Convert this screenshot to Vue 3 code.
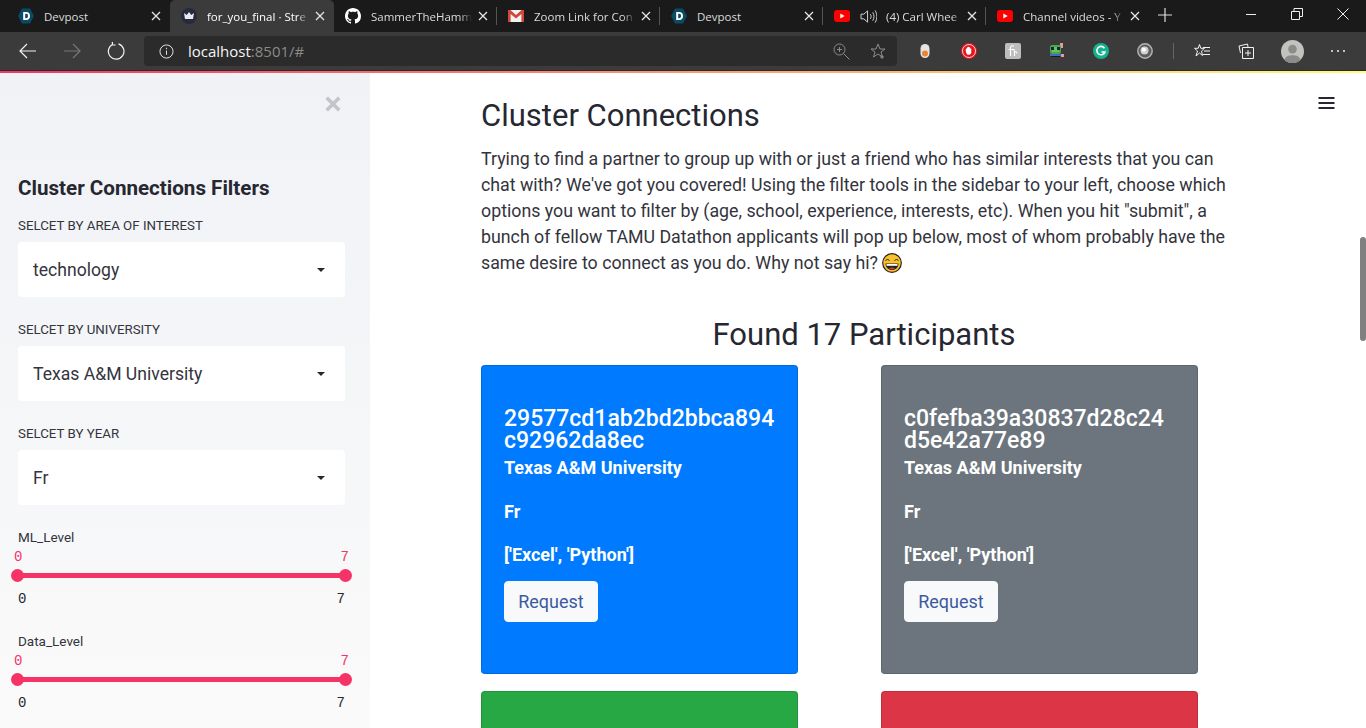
<script setup>
// titles are the part the browser leaves visible in each tab
const tabs = [
  { title: "Devpost", icon: "devpost" },
  { title: "for_you_final · Stre", icon: "crown", active: true },
  { title: "SammerTheHamm", icon: "github" },
  { title: "Zoom Link for Con", icon: "gmail" },
  { title: "Devpost", icon: "devpost" },
  { title: "(4) Carl Whee", icon: "youtube", audio: true },
  { title: "Channel videos - Y", icon: "youtube" },
];

const selects = [
  { label: "SELCET BY AREA OF INTEREST", value: "technology" },
  { label: "SELCET BY UNIVERSITY", value: "Texas A&M University" },
  { label: "SELCET BY YEAR", value: "Fr" },
];

const sliders = ["ML_Level", "Data_Level"];

const cards = [
  { id: "29577cd1ab2bd2bbca894c92962da8ec", color: "#007bff", filled: true },
  { id: "c0fefba39a30837d28c24d5e42a77e89", color: "#6c757d", filled: true },
  { color: "#28a745" },
  { color: "#dc3545" },
];
</script>

<template>
  <div class="screen">
    <header class="browser">
      <div class="tabstrip">
        <div
          v-for="(tab, i) in tabs"
          :key="i"
          class="tab"
          :class="{ active: tab.active }"
        >
          <svg v-if="tab.icon === 'devpost'" class="favicon" viewBox="0 0 16 16">
            <path d="M4 .5h8L16 8l-4 7.500H4L0 8z" fill="#0b4a63" />
            <path d="M5.200 4h3c2.400 0 3.800 1.600 3.800 4s-1.400 4-3.800 4h-3z M7.200 5.800v4.400h1c1.200 0 1.800-.9 1.800-2.200s-.6-2.200-1.800-2.200z" fill="#fff" fill-rule="evenodd" />
          </svg>
          <svg v-else-if="tab.icon === 'crown'" class="favicon" viewBox="0 0 16 16">
            <circle cx="8" cy="8" r="8" fill="#262a3c" />
            <path d="M3 5l2.700 2L8 4l2.300 3L13 5l-1 6H4z" fill="#e8e8ee" />
          </svg>
          <svg v-else-if="tab.icon === 'github'" class="favicon" viewBox="0 0 16 16">
            <path fill="#fff" d="M8 0C3.580 0 0 3.580 0 8c0 3.540 2.290 6.530 5.470 7.590.4.070.55-.17.55-.38 0-.19-.01-.82-.01-1.490-2.010.370-2.530-.49-2.690-.94-.09-.23-.48-.94-.82-1.130-.28-.15-.68-.52-.01-.53.63-.01 1.080.58 1.230.82.720 1.210 1.870.87 2.330.66.070-.52.280-.87.510-1.070-1.780-.2-3.640-.89-3.640-3.950 0-.87.310-1.590.820-2.150-.08-.2-.36-1.020.08-2.120 0 0 .67-.21 2.200.82.640-.18 1.320-.27 2-.27s1.360.09 2 .27c1.530-1.040 2.200-.82 2.200-.82.440 1.100.160 1.920.080 2.120.510.560.820 1.270.820 2.150 0 3.070-1.870 3.750-3.650 3.950.290.250.540.730.540 1.480 0 1.070-.01 1.930-.01 2.200 0 .210.150.460.550.380A8.010 8.010 0 0 0 16 8c0-4.420-3.580-8-8-8z" />
          </svg>
          <svg v-else-if="tab.icon === 'gmail'" class="favicon gmail" viewBox="0 0 16 12">
            <rect width="16" height="12" fill="#f2f2f2" />
            <path d="M0 0h2.400L8 5l5.600-5H16v12h-2.600V4L8 8.600 2.600 4v8H0z" fill="#d0473b" />
          </svg>
          <svg v-else class="favicon yt" viewBox="0 0 16 12">
            <rect width="16" height="12" rx="3" fill="#f00" />
            <path d="M6.300 3.400l4.400 2.600-4.400 2.600z" fill="#fff" />
          </svg>
          <svg v-if="tab.audio" class="speaker" viewBox="0 0 18 16" fill="none" stroke="#ddd">
            <path d="M1 5.500h3l4-3.500v12l-4-3.500H1zM11 5.500c1 1.500 1 3.500 0 5M13.500 3.500c1.800 2.700 1.800 6.300 0 9M16 1.500c2.500 4 2.500 9 0 13" />
          </svg>
          <span class="tab-title">{{ tab.title }}</span>
          <svg class="tab-close" viewBox="0 0 10 10" fill="none" stroke="#e6e6e6" stroke-width="1.300">
            <path d="M1 1l8 8M9 1l-8 8" />
          </svg>
        </div>
        <svg class="new-tab" viewBox="0 0 14 14" fill="none" stroke="#ddd" stroke-width="1.200">
          <path d="M7 0v14M0 7h14" />
        </svg>
        <div class="window-controls">
          <svg viewBox="0 0 12 12" fill="none" stroke="#eee"><path d="M1 6.500h10" /></svg>
          <svg viewBox="0 0 12 12" fill="none" stroke="#eee"><path d="M.5 3.500h8v8h-8zM3 3.500V.5h8.500v8h-3" /></svg>
          <svg viewBox="0 0 12 12" fill="none" stroke="#eee"><path d="M.5.500l11 11M11.500.500l-11 11" /></svg>
        </div>
      </div>

      <div class="toolbar">
        <svg class="nav" viewBox="0 0 18 16" fill="none" stroke="#f2f2f2" stroke-width="1.200"><path d="M17 8H1M8 1L1 8l7 7" /></svg>
        <svg class="nav" viewBox="0 0 18 16" fill="none" stroke="#777" stroke-width="1.200"><path d="M1 8h16M10 1l7 7-7 7" /></svg>
        <svg class="nav" viewBox="0 0 18 18" fill="none" stroke="#f2f2f2" stroke-width="1.200"><path d="M6 2.200a7.800 7.800 0 1 0 5.500-.3M5.400 0v3h3.200" /></svg>
        <div class="address">
          <svg class="info" viewBox="0 0 16 16" fill="none" stroke="#eee"><circle cx="8" cy="8" r="7" /><path d="M8 7v4.500M8 4v1.500" /></svg>
          <span class="url">localhost<span class="url-rest">:8501/#</span></span>
          <svg class="addr-zoom" viewBox="0 0 17 17" fill="none" stroke="#8c8c8c"><circle cx="6.500" cy="6.500" r="5.500" /><path d="M10.500 10.500l6 6M4 6.500h5M6.500 4v5" /></svg>
          <svg class="addr-star" viewBox="0 0 16 16" fill="none" stroke="#8c8c8c"><path d="M8 1l2 5h5l-4 3 1.500 5L8 11l-4.500 3L5 9 1 6h5z" /><path d="M12 12v4M10 14h4" /></svg>
        </div>
        <div class="extensions">
          <svg viewBox="0 0 16 16"><rect x="3.500" y="1" width="9" height="14" rx="4.500" fill="#e4e4e4" /><circle cx="8" cy="10.500" r="3" fill="#ee8432" /></svg>
          <svg viewBox="0 0 16 16">
            <circle cx="8" cy="8" r="8" fill="#e8141c" />
            <circle cx="8" cy="8" r="6.500" fill="none" stroke="#fff" stroke-width=".8" />
            <path d="M4.800 8.500V5.800a.6.6 0 0 1 1.100 0V4.500a.6.6 0 0 1 1.100 0V4a.6.6 0 0 1 1.100 0v.5a.6.6 0 0 1 1.100 0v1.300a.6.6 0 0 1 1.100 0v3.400c0 1.500-1 2.500-2.400 2.500H7.500c-1 0-1.500-.5-2-1.300z" fill="#fff" />
          </svg>
          <svg viewBox="0 0 16 16"><rect width="16" height="16" rx="2" fill="#bdbdbd" /><path d="M5.500 13V5c0-2 1.500-2.500 3.500-2M3.500 6.500H9l.5 2v4.500M9.500 8.500c1.500 0 2.500.5 2.500 2" fill="none" stroke="#fff" stroke-width="1.100" /></svg>
          <svg viewBox="0 0 16 16">
            <rect x="11" y="0" width="3" height="5" fill="#e79a9a" />
            <rect x="1" y="2" width="11" height="9" rx="2" fill="#4aa64f" />
            <rect x="3" y="4" width="7" height="5" fill="#63c267" />
            <rect x="2" y="4" width="3" height="3" fill="#15301a" />
            <rect x="8" y="4" width="3" height="3" fill="#15301a" />
            <rect x="1" y="11" width="13" height="2" fill="#3b6fc0" />
            <rect x="12" y="11" width="3" height="3" fill="#e79a9a" />
            <rect x="2" y="13" width="9" height="1" fill="#1a1a1a" />
          </svg>
          <svg viewBox="0 0 16 16"><circle cx="8" cy="8" r="8" fill="#15b28d" /><path d="M11.500 5.200A4.200 4.200 0 1 0 12 9H8.500" fill="none" stroke="#fff" stroke-width="1.600" /></svg>
          <svg viewBox="0 0 16 16"><circle cx="8" cy="8" r="7.200" fill="#5c5c5c" stroke="#b5b5b5" stroke-width="1.400" /><circle cx="7.500" cy="7.500" r="4" fill="#cfcfcf" /><circle cx="6.800" cy="6.800" r="2" fill="#fff" /></svg>
        </div>
        <span class="tool-sep" />
        <div class="tools">
          <svg viewBox="0 0 16 16" fill="none" stroke="#f2f2f2"><path d="M5.500 1.500l1.300 3.800H10.500L7.500 8l1 4.500-3-2.500-3.500 3 1.500-5L.5 5.300h3.700zM9 4.500h7M10 8h6M9 11.500h7" /></svg>
          <svg viewBox="0 0 16 16" fill="none" stroke="#f2f2f2"><path d="M2.500 10L1 3 9.500 1l.5 3" /><path d="M4.500 4.500h11v11h-11zM10 7v6M7 10h6" /></svg>
          <svg class="avatar" viewBox="0 0 24 24"><circle cx="12" cy="12" r="12" fill="#c4c2bf" /><circle cx="12" cy="9.500" r="4.500" fill="#8b8b8b" /><path d="M3.500 20.500c2-4 5-4.500 8.500-4.500s6.500.5 8.500 4.500A12 12 0 0 1 12 24a12 12 0 0 1-8.500-3.500z" fill="#8b8b8b" /></svg>
          <div class="more"><i /><i /><i /></div>
        </div>
      </div>
      <div class="decoration" />
    </header>

    <div class="page">
      <aside class="sidebar">
        <svg class="sidebar-close" viewBox="0 0 14 14" fill="none" stroke="#c3c5ca" stroke-width="3.200">
          <path d="M1.500 1.500l11 11M12.500 1.500l-11 11" />
        </svg>
        <h2 class="sidebar-title">Cluster Connections Filters</h2>
        <div v-for="s in selects" :key="s.label" class="field">
          <div class="field-label">{{ s.label }}</div>
          <div class="select">
            <span>{{ s.value }}</span>
            <i class="caret" />
          </div>
        </div>
        <div v-for="name in sliders" :key="name" class="slider">
          <div class="slider-name">{{ name }}</div>
          <div class="slider-track">
            <span class="val val-left">0</span>
            <span class="val val-right">7</span>
            <i class="thumb thumb-left" />
            <i class="thumb thumb-right" />
          </div>
          <div class="slider-ticks"><span>0</span><span>7</span></div>
        </div>
      </aside>

      <main class="content">
        <svg class="hamburger" viewBox="0 0 16 14" fill="none" stroke="#262730" stroke-width="2">
          <path d="M0 2h16M0 7h16M0 12h16" />
        </svg>
        <div class="block">
          <h1>Cluster Connections</h1>
          <p class="intro">
            Trying to find a partner to group up with or just a friend who has similar interests that you can
            chat with? We've got you covered! Using the filter tools in the sidebar to your left, choose which
            options you want to filter by (age, school, experience, interests, etc). When you hit "submit", a
            bunch of fellow TAMU Datathon applicants will pop up below, most of whom probably have the
            same desire to connect as you do. Why not say hi?
            <svg class="emoji" viewBox="0 0 20 20">
              <circle cx="10" cy="10" r="9.300" fill="#fbc02d" stroke="#222" stroke-width="1.200" />
              <path d="M3.500 8c.8-2 3-2 4 0M12.500 8c.8-2 3-2 4 0" fill="none" stroke="#222" />
              <path d="M3.500 10.500h13c0 4-3 6.500-6.500 6.500s-6.500-2.500-6.500-6.500z" fill="#222" />
              <path d="M4.500 11h11v1.800h-11z" fill="#fff" />
              <path d="M7 15.500c2-1.200 4-1.200 6 0-2 1.200-4 1.200-6 0z" fill="#e53935" />
            </svg>
          </p>
          <h2 class="found">Found 17 Participants</h2>
          <div class="cards">
            <div v-for="(c, i) in cards" :key="i" class="card" :style="{ background: c.color }">
              <template v-if="c.filled">
                <h3>{{ c.id }}</h3>
                <p class="school">Texas A&amp;M University</p>
                <p class="year">Fr</p>
                <p class="skills">['Excel', 'Python']</p>
                <button class="request">Request</button>
              </template>
            </div>
          </div>
        </div>
        <div class="scrollbar" />
      </main>
    </div>
  </div>
</template>

<style>
html,
body {
  margin: 0;
  overflow: hidden;
}
</style>

<style scoped>
.screen {
  width: 1366px;
  height: 728px;
  overflow: hidden;
  display: flex;
  flex-direction: column;
  font-family: Roboto, "Liberation Sans", sans-serif;
  color: #262730;
}

/* browser chrome */
.browser {
  flex: none;
  background: #3b3b3b;
}
.tabstrip {
  height: 32px;
  background: #1a1a1a;
  display: flex;
  align-items: stretch;
  padding-left: 7px;
  font-family: "Open Sans", sans-serif;
  font-size: 11.500px;
  color: #dcdcdc;
}
.tab {
  width: 163px;
  box-sizing: border-box;
  display: flex;
  align-items: center;
  padding: 0 9px 0 11px;
  position: relative;
  border-radius: 5px 5px 0 0;
}
.tab.active {
  background: #3b3b3b;
  color: #fff;
  width: 164px;
}
.tab:not(.active) + .tab:not(.active)::before {
  content: "";
  position: absolute;
  left: -1px;
  top: 7px;
  height: 18px;
  width: 1px;
  background: #555;
}
.favicon {
  width: 16px;
  height: 16px;
  flex: none;
}
.favicon.gmail,
.favicon.yt {
  height: 12px;
}
.speaker {
  width: 17px;
  height: 15px;
  flex: none;
  margin-left: 10px;
  margin-right: -1px;
}
.tab-title {
  flex: 1;
  min-width: 0;
  margin: 0 6px 0 10px;
  white-space: nowrap;
  overflow: hidden;
  -webkit-mask-image: linear-gradient(90deg, #000 88%, transparent);
  mask-image: linear-gradient(90deg, #000 88%, transparent);
}
.tab:first-child .tab-title,
.tab:nth-child(5) .tab-title {
  -webkit-mask-image: none;
  mask-image: none;
}
.tab-close {
  width: 10px;
  height: 10px;
  flex: none;
}
.new-tab {
  width: 14px;
  height: 14px;
  margin: 8px 0 0 9px;
}
.window-controls {
  margin-left: auto;
  display: flex;
  gap: 34px;
  padding: 8px 17px 0 0;
}
.window-controls svg {
  width: 12px;
  height: 12px;
}

.toolbar {
  height: 38px;
  display: flex;
  align-items: center;
  padding-left: 19px;
  box-sizing: border-box;
}
.nav {
  width: 18px;
  height: 18px;
  margin-right: 26px;
  flex: none;
}
.address {
  width: 753px;
  height: 30px;
  margin-left: -7px;
  flex: none;
  background: #2b2b2b;
  border-radius: 4px;
  display: flex;
  align-items: center;
  padding: 0 11px 0 15px;
  box-sizing: border-box;
}
.info {
  width: 15px;
  height: 15px;
}
.url {
  margin-left: 14px;
  font: 15px "Open Sans", sans-serif;
  color: #f5f5f5;
}
.url-rest {
  color: #8a8a8a;
}
.addr-zoom {
  width: 17px;
  height: 17px;
  margin-left: auto;
}
.addr-star {
  width: 16px;
  height: 16px;
  margin-left: 20px;
}
.extensions {
  display: flex;
  gap: 28px;
  margin-left: 20px;
}
.extensions svg {
  width: 16px;
  height: 16px;
}
.tool-sep {
  width: 1px;
  height: 16px;
  background: #666;
  margin: 0 20px;
}
.tools {
  display: flex;
  align-items: center;
}
.tools svg {
  width: 16px;
  height: 16px;
  margin-right: 28px;
}
.tools .avatar {
  width: 23px;
  height: 23px;
  margin: 0 27px 0 -1px;
}
.more {
  display: flex;
  gap: 4px;
}
.more i {
  width: 2px;
  height: 2px;
  border-radius: 50%;
  background: #eee;
}
.decoration {
  height: 2px;
  border-top: 1px solid #2b2b2b;
  background: linear-gradient(90deg, #f63366, #fffd80);
}

/* streamlit page */
.page {
  flex: 1;
  min-height: 0;
  display: flex;
}
.sidebar {
  width: 370px;
  flex: none;
  box-sizing: border-box;
  padding: 0 25px 0 18px;
  position: relative;
  background: linear-gradient(180deg, #f0f2f6, #fafafa);
}
.sidebar-close {
  position: absolute;
  left: 325px;
  top: 23px;
  width: 16px;
  height: 16px;
}
.sidebar-title {
  margin: 103px 0 0;
  font-size: 20.600px;
  line-height: 24px;
  font-weight: 700;
}
.field {
  margin-top: 17px;
}
.field + .field {
  margin-top: 24px;
}
.field-label {
  font-size: 13.300px;
  line-height: 17px;
  color: #33343d;
}
.select {
  margin-top: 8px;
  height: 55px;
  background: #fff;
  border-radius: 4px;
  display: flex;
  align-items: center;
  justify-content: space-between;
  padding: 0 20px 0 15px;
  font-size: 17.600px;
  color: #33343d;
}
.caret {
  width: 0;
  height: 0;
  border: 4.500px solid transparent;
  border-top: 4px solid #262730;
  border-bottom: 0;
}
.slider {
  margin-top: 24px;
}
.slider + .slider {
  margin-top: 25px;
}
.slider-name {
  font-size: 13.500px;
  line-height: 17px;
  color: #33343d;
}
.slider-track {
  position: relative;
  height: 5px;
  margin-top: 27px;
  background: #f63366;
  border-radius: 3px;
}
.thumb {
  position: absolute;
  top: -4px;
  width: 13px;
  height: 13px;
  border-radius: 50%;
  background: #f63366;
}
.thumb-left {
  left: -7px;
}
.thumb-right {
  right: -7px;
}
.val {
  position: absolute;
  top: -25px;
  font: 14px/18px "Liberation Mono", monospace;
  color: #f63366;
}
.val-left {
  left: -4px;
}
.val-right {
  right: -4px;
}
.slider-ticks {
  display: flex;
  justify-content: space-between;
  margin-top: 12px;
  font: 14px/18px "Liberation Mono", monospace;
}

.content {
  flex: 1;
  min-width: 0;
  position: relative;
  padding-left: 111px;
  background: #fff;
}
.hamburger {
  position: absolute;
  left: 948px;
  top: 23px;
  width: 17px;
  height: 14px;
}
.block {
  width: 766px;
}
h1 {
  margin: 23px 0 0;
  font-size: 31px;
  line-height: 40px;
  font-weight: 400;
}
.intro {
  margin: 10px 0 0;
  font-size: 17.800px;
  line-height: 26px;
  color: #33343d;
}
.emoji {
  width: 20px;
  height: 20px;
  vertical-align: -4px;
}
.found {
  margin: 39px 0 0;
  text-align: center;
  font-size: 31px;
  line-height: 40px;
  font-weight: 400;
}
.cards {
  margin-top: 10px;
  display: grid;
  grid-template-columns: 317px 317px;
  column-gap: 83px;
  row-gap: 17px;
}
.card {
  height: 309px;
  box-sizing: border-box;
  border: 1px solid rgba(0, 0, 0, 0.125);
  border-radius: 4px;
  padding: 42px 22px 0;
  color: #fff;
}
.card h3 {
  margin: 0;
  font-size: 23px;
  line-height: 22px;
  font-weight: 500;
  word-break: break-all;
}
.card p {
  font-size: 18px;
  line-height: 18px;
  font-weight: 700;
}
.school {
  margin: 7px 0 0;
}
.year {
  margin: 26px 0 0;
}
.skills {
  margin: 25px 0 0;
}
.request {
  display: block;
  margin-top: 17px;
  height: 41px;
  width: 94px;
  padding: 0;
  border: 1px solid #f8f9fa;
  border-radius: 4px;
  background: #f8f9fa;
  color: #3c5aa0;
  font: 18px Roboto, sans-serif;
}
.scrollbar {
  position: absolute;
  right: 0;
  top: 164px;
  width: 6px;
  height: 104px;
  border-radius: 3px;
  background: #808080;
}
</style>
